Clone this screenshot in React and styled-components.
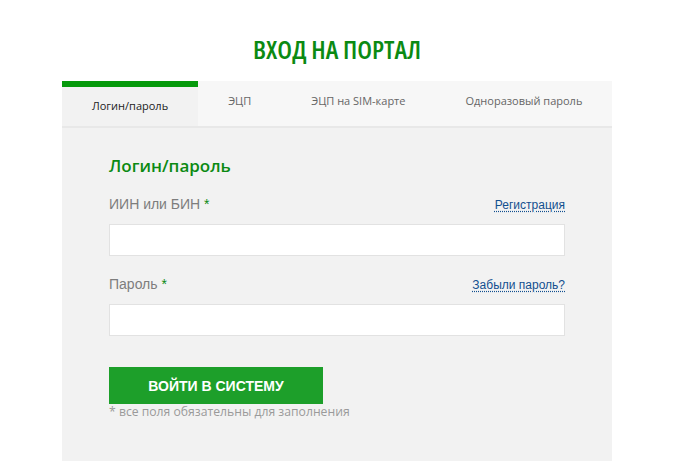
import React from "react";
import styled, { createGlobalStyle } from "styled-components";

const Global = createGlobalStyle`
  html, body { margin: 0; padding: 0; background: #ffffff; }
  body { font-family: "Liberation Sans", Arial, sans-serif; }
  * { box-sizing: border-box; }
`;

const Page = styled.div`
  width: 550px;
  margin-left: 62px;
`;

const Title = styled.h1`
  margin: 0;
  padding-top: 35px;
  margin-bottom: 18px;
  text-align: center;
  font-family: "Open Sans", sans-serif;
  font-stretch: 76%;
  font-weight: 600;
  font-size: 26px;
  line-height: 28px;
  color: #0b8a12;
`;

const TabBar = styled.div`
  display: flex;
  height: 47px;
  background: #f7f7f7;
  border-bottom: 2px solid #e8e8e8;
`;

const Tab = styled.div`
  padding: ${(p) => (p.$active ? "11px 30px 0" : "12px 30px 0")};
  border-top: ${(p) => (p.$active ? "6px solid #069a0c" : "0")};
  background: ${(p) => (p.$active ? "#f2f2f2" : "transparent")};
  font-family: "Open Sans", sans-serif;
  font-size: 11px;
  line-height: 16px;
  color: ${(p) => (p.$active ? "#222222" : "#666666")};
  white-space: nowrap;
`;

const Panel = styled.div`
  background: #f2f2f2;
  padding: 27px 47px 41px;
`;

const SectionTitle = styled.h2`
  margin: 0 0 18px;
  font-family: "Open Sans", sans-serif;
  font-stretch: 90%;
  font-weight: 600;
  font-size: 17px;
  line-height: 22px;
  color: #0b8a12;
`;

const LabelRow = styled.div`
  display: flex;
  justify-content: space-between;
  align-items: baseline;
  margin-top: ${(p) => p.$top || 0}px;
  margin-bottom: 10px;
  line-height: 18px;
`;

const Label = styled.label`
  font-size: 14px;
  color: #7d7d7d;
`;

const Star = styled.span`
  color: #0b8a12;
`;

const Link = styled.a`
  font-size: 12px;
  color: #124f8f;
  text-decoration: underline dotted;
  text-underline-offset: 2px;
  cursor: pointer;
`;

const Input = styled.input`
  display: block;
  width: 100%;
  height: 32px;
  background: #ffffff;
  border: 1px solid #e2e2e2;
  outline: none;
  padding: 0 8px;
  font-size: 14px;
`;

const Button = styled.button`
  display: block;
  margin-top: 31px;
  width: 214px;
  height: 37px;
  border: 0;
  background: #1d9f2a;
  color: #ffffff;
  font-family: "Liberation Sans", Arial, sans-serif;
  font-weight: 700;
  font-size: 14px;
  cursor: pointer;
`;

const Note = styled.div`
  font-family: "Open Sans", sans-serif;
  font-size: 12.2px;
  line-height: 16px;
  color: #9a9a9a;
`;

export default function App() {
  const tabs = ["Логин/пароль", "ЭЦП", "ЭЦП на SIM-карте", "Одноразовый пароль"];
  return (
    <>
      <Global />
      <Page>
        <Title>ВХОД НА ПОРТАЛ</Title>
        <TabBar>
          {tabs.map((t, i) => (
            <Tab key={t} $active={i === 0}>
              {t}
            </Tab>
          ))}
        </TabBar>
        <Panel>
          <SectionTitle>Логин/пароль</SectionTitle>
          <LabelRow>
            <Label>
              ИИН или БИН <Star>*</Star>
            </Label>
            <Link>Регистрация</Link>
          </LabelRow>
          <Input type="text" />
          <LabelRow $top={19}>
            <Label>
              Пароль <Star>*</Star>
            </Label>
            <Link>Забыли пароль?</Link>
          </LabelRow>
          <Input type="password" />
          <Button>ВОЙТИ В СИСТЕМУ</Button>
          <Note>* все поля обязательны для заполнения</Note>
        </Panel>
      </Page>
    </>
  );
}
